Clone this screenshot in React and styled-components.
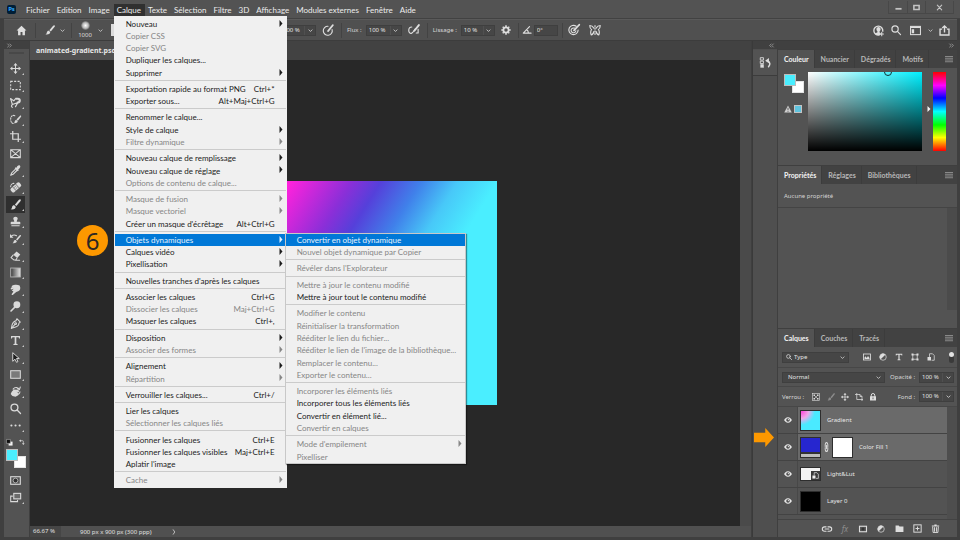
import React from "react";
import styled, { createGlobalStyle, css } from "styled-components";

const Global = createGlobalStyle`
  * { box-sizing: border-box; }
  html, body, #root { height: 100%; }
  body { margin: 0; overflow: hidden; background: #3a3a3a; }
  body, button, input, select { font-family: "Noto Sans", "Open Sans", sans-serif; font-size: 6px; }
  button { border: 0; padding: 0; background: none; color: inherit; cursor: default; }
  ul { list-style: none; margin: 0; padding: 0; }
`;

/* ---------- icons (16 x 16 grid) ---------- */

const line = { fill: "none", stroke: "currentColor", strokeWidth: 1.5, strokeLinecap: "round", strokeLinejoin: "round" };
const solid = { fill: "currentColor" };

const glyphs = {
  home: <path {...solid} d="M8 1 0.8 8H3v7h3.6v-5h2.8v5H13V8h2.2z" />,
  brush: (
    <g {...solid}>
      <path d="M15.4.6c.7.7.4 1.6-.3 2.6L9.3 10.300 7 8.300 13 1.200c.8-.9 1.700-1.200 2.400-.6z" />
      <path d="M6.200 9.200l2.100 1.900c.3 2.600-2.400 4.600-7.600 3.900 2-.9 1.900-2.100 2.300-3.500.4-1.500 1.800-2.600 3.200-2.300z" />
    </g>
  ),
  opacity: (
    <g {...line}>
      <path d="M13.500 7.500A6 6 0 1 1 8 3" />
      <path strokeWidth="2.200" d="M14.500 1.500 8 9.500" />
    </g>
  ),
  airbrush: (
    <g {...line}>
      <path d="M5 4c-3 0-4 2-4 4.500S2.500 13 4.500 12.500 8 9 10 6" />
      <path strokeWidth="2.600" d="M14.500 1.500 8.500 9" />
      <path d="M13.500 7v5H11" />
    </g>
  ),
  gear: (
    <g>
      <circle cx="8" cy="8" r="4.300" fill="none" stroke="currentColor" strokeWidth="3" />
      <path {...line} strokeWidth="2.400" strokeLinecap="butt" d="M8 .5v2.500M8 13v2.500M.5 8H3M13 8h2.500M2.700 2.700l1.800 1.800M11.500 11.500l1.800 1.800M2.700 13.300l1.800-1.800M11.500 4.500l1.800-1.800" />
    </g>
  ),
  angle: <path {...line} strokeWidth="1.800" d="M12 2.500 2 13h12.500M7.500 7.500c2 1.200 2.800 3 2.800 5.500" />,
  target: (
    <g {...line}>
      <path d="M11 3A6.200 6.200 0 1 0 13.500 8" />
      <path d="M8.500 5.500A3.200 3.200 0 1 0 10.500 9" />
      <path strokeWidth="2.400" d="M15 1 8 8.500" />
    </g>
  ),
  butterfly: (
    <g {...line}>
      <path d="M8 2v12" strokeDasharray="1.500 2" />
      <path d="M6.500 5.500C5 3 2.500 2 1 2c0 2.500.8 4.500 2.500 5.500C1.800 9 2 13 3 14.500 5 14.500 6 12 6.500 10M9.500 5.500C11 3 13.500 2 15 2c0 2.500-.8 4.500-2.500 5.500C14.200 9 14 13 13 14.500c-2 0-3-2.500-3.500-4.500" />
    </g>
  ),
  user: (
    <g>
      <path {...line} strokeWidth="2" d="M9 14.500A6.500 6.500 0 1 1 14.200 9" />
      <path {...solid} d="M8 3c2 0 3 1.400 3 3.300 0 1.500-.7 2.500-1.500 3.200v1L11 12v2.500H5L3 12.300l3.500-1.800v-1C5.700 8.800 5 7.800 5 6.300 5 4.400 6 3 8 3z" />
      <path {...line} d="M12.700 10.500v5M10.200 13h5" />
    </g>
  ),
  search: (
    <g {...line} strokeWidth="1.900">
      <circle cx="6.500" cy="6.500" r="5" />
      <path d="m10.300 10.300 5 5" />
    </g>
  ),
  workspace: (
    <g>
      <rect x=".8" y="2" width="14.400" height="12" {...line} strokeLinejoin="miter" />
      <path {...solid} d="M1 2h14v2.500H1zM2.500 6H6v6H2.500z" />
    </g>
  ),
  share: <path {...line} strokeWidth="2" strokeLinecap="butt" strokeLinejoin="miter" d="M4.500 6H1.500v8.500h13V6h-3M8 11V1.500M4.800 4.500 8 1.500l3.200 3" />,
  chevron: <path {...line} strokeWidth="2.400" d="m3 6 5 5 5-5" />,
  chevronRight: <path {...line} strokeWidth="2" d="m6 2 4 6-4 6" />,
  dblRight: <path {...line} strokeWidth="1.800" d="m2 3 5 5-5 5M9 3l5 5-5 5" />,
  dblLeft: <path {...line} strokeWidth="1.800" d="M7 3 2 8l5 5M14 3 9 8l5 5" />,
  minimize: <path {...solid} d="M1 9h14v4H1z" />,
  maximize: <path fill="none" stroke="currentColor" strokeWidth="3.500" d="M2 3.500h12v9H2z" />,
  close: <path {...line} strokeWidth="2.600" d="m3 2.500 10 11M13 2.500l-10 11" />,
  burger: <path fill="none" stroke="currentColor" strokeWidth="1.600" d="M0 3h16M0 6.500h16M0 10h16M0 13.500h16" />,
  move: (
    <g>
      <path {...line} d="M8 2v12M2 8h12" />
      <path {...solid} d="M8 0l3 3.500H5zM8 16l-3-3.500h6zM0 8l3.500-3v6zM16 8l-3.500 3V5z" />
    </g>
  ),
  marquee: <rect x="1" y="2" width="14" height="12" fill="none" stroke="currentColor" strokeWidth="1.500" strokeDasharray="3 2" />,
  lasso: (
    <g {...line} strokeWidth="1.700">
      <path d="M1 2.500 5.500 5.500 8.500 2" />
      <path d="M1 2.500 3.500 11 11.500 8M3.500 11c-2 1.500-1.500 3.500 0 4M8 14l3.500-6" />
      <path strokeWidth="3" strokeLinecap="butt" d="M8.500 2.500h3a2.700 2.700 0 0 1 0 5.400H10" />
    </g>
  ),
  quickselect: (
    <g>
      <path {...line} strokeDasharray="2 1.800" d="M7 2.500C4 1 1 3 1 7.500S3 14 6 14" />
      <g transform="translate(4.500 2) scale(.75)" {...solid}>
        <path d="M15.400.6c.7.7.4 1.600-.3 2.600L9.300 10.300 6.500 8 13 1.200c.8-.9 1.700-1.200 2.400-.6z" />
        <path d="M6.200 8.800l2.700 2.300c.3 2.900-2.400 4.900-7.600 4.200 2-.9 1.500-2.400 1.900-3.800.4-1.500 1.600-3 3-2.700z" />
      </g>
    </g>
  ),
  crop: <path {...line} strokeWidth="1.800" strokeLinecap="butt" strokeLinejoin="miter" d="M4 0v12h12M0 4h12v12" />,
  frame: <path {...line} strokeLinejoin="miter" d="M1 2.500h14v11.500H1zM1 2.500 15 14M15 2.500 1 14" />,
  dropper: (
    <g>
      <path {...solid} d="M10.500 1.800c1.400-1.400 3-1.800 4-.8s.5 2.600-.9 4L12 6.500l.8 1-1.600 1.500L6.800 4.700 8.400 3.200l1 .7z" />
      <path {...line} strokeWidth="1.600" d="M8 6 2.500 11.500 1 15l3.500-1.500L10 8" />
    </g>
  ),
  heal: (
    <g>
      <g transform="rotate(-42 8 8)">
        <rect x="0" y="4.500" width="17" height="7.500" rx="2.500" {...solid} />
        <path stroke="#535353" strokeWidth="1" d="M5.500 4v8M11.500 4v8" />
        <path {...line} stroke="#535353" strokeWidth="1.200" d="M7.500 6.800h.1M9.500 6.800h.1M7.500 9.600h.1M9.500 9.600h.1" />
      </g>
      <path {...line} strokeDasharray="1.500 1.500" d="M1 7C1 4 3 2 6 2" />
    </g>
  ),
  stamp: <path {...solid} d="M8 1c2 0 3.200 1.200 3.200 2.800 0 1.700-1.400 2.400-1.400 4.700H14c.6 0 1 .4 1 1V12H1V9.500c0-.6.4-1 1-1h4.200c0-2.300-1.400-3-1.400-4.700C4.800 2.200 6 1 8 1zM2 13.500h12V15H2z" />,
  history: (
    <g>
      <g transform="translate(3 2.500) scale(.82)" {...solid}>
        <path d="M15.400.6c.7.7.4 1.600-.3 2.600L9.300 10.300 7 8.300 13 1.200c.8-.9 1.700-1.200 2.400-.6z" />
        <path d="M6.200 9.200l2.100 1.900c.3 2.600-2.400 4.600-7.600 3.900 2-.9 1.900-2.100 2.300-3.500.4-1.500 1.800-2.600 3.200-2.300z" />
      </g>
      <path {...line} d="M2 4.500c2.500-2 5-2 7.500-.500" />
      <path {...solid} d="M0 1.500V7h5z" />
    </g>
  ),
  eraser: (
    <g>
      <path {...solid} d="M9.500 2 15 6.500l-4.500 5L4.800 7z" />
      <path {...line} d="M4.500 7.500 1.500 11l4 3.500h3L10 12M8 15h6" />
    </g>
  ),
  gradient: (
    <g>
      <defs>
        <linearGradient id="toolGradient">
          <stop offset="0" stopColor="#3a3a3a" />
          <stop offset="1" stopColor="#e4e4e4" />
        </linearGradient>
      </defs>
      <rect x="1" y="1.500" width="14" height="13" fill="url(#toolGradient)" stroke="#b5b5b5" strokeWidth="1.300" />
    </g>
  ),
  smudge: <path {...solid} d="M3 2.500C6 .5 11 .5 14 2l1 3.500c0 3-1.500 5-4 5.500l-2 .5-5 4.500c-1 .5-2-.5-1.500-1.500L5 11 2.500 9.500 5.500 7 1.500 8c-.8-1-.5-2 .5-2.500L5 4.500 2 5z" />,
  dodge: (
    <g>
      <circle cx="10" cy="5.500" r="5" {...solid} />
      <path {...line} strokeWidth="2.400" d="M6.500 9.500 1.500 14.500" />
    </g>
  ),
  pen: (
    <g {...line}>
      <path d="m10 1 5 5-2 1.500c0 3-2.500 5-6 6L2 15l1-5c1-3.500 3-5.500 5.700-6z" />
      <path d="m2 15 5.500-6" />
      <circle cx="8.200" cy="8.300" r="1.300" />
    </g>
  ),
  text: <path {...solid} d="M1.500 1.500h13V5h-1.300l-.7-1.700H9.200v9.400l1.800.5v1.300H5v-1.300l1.800-.5V3.300H3.500L2.800 5H1.500z" />,
  select: <path fill="#1c1c1c" stroke="#d8d8d8" strokeWidth="1.400" d="M4 1v12.500l3.300-3L9.500 15l2-1-2-4.500h4z" />,
  rect: <rect x="1" y="2.500" width="14" height="11" fill="#7a7a7a" stroke="currentColor" strokeWidth="1.500" />,
  rotate: (
    <g>
      <path {...solid} d="M2.500 8.500 5.500 5l5 .5 3 1.500-1 2-3-.8 3 2-.5 3.300-4 2-4.500-.8L1 11.500z" />
      <path {...line} d="M4.500 4.500C7 1 12 1.500 13.500 5M15 1.500 13.700 5.300 10.500 4M12.500 12c1.500-1 2-2 2-3.500" />
    </g>
  ),
  dots: <path {...line} strokeWidth="3" d="M2 8h.1M8 8h.1M14 8h.1" />,
  mask: (
    <g>
      <rect x="1" y="2.500" width="14" height="11" fill="none" stroke="currentColor" strokeWidth="1.600" />
      <circle cx="8" cy="8" r="3.500" fill="#303030" stroke="currentColor" strokeWidth="1" />
    </g>
  ),
  screen: (
    <g>
      <rect x="5.500" y="2" width="10" height="8" fill="#6b6b6b" stroke="currentColor" strokeWidth="1.600" />
      <path {...line} strokeLinejoin="miter" d="M3.500 6H1v8h10v-2" />
    </g>
  ),
  defaults: (
    <g>
      <path fill="#f0f0f0" d="M6 6h9v9H6z" />
      <path fill="#101010" stroke="#bbb" strokeWidth="1.200" d="M1 1h9v9H1z" />
    </g>
  ),
  swap: (
    <g>
      <path {...line} strokeWidth="1.800" d="M4 4.500h5.500c1.500 0 2 .8 2 2V11" />
      <path {...solid} d="M0 4.500 5 1v7zM11.500 16 8 11h7z" />
    </g>
  ),
  panelHistory: (
    <g {...line} strokeWidth="1.300" strokeLinejoin="miter">
      <path d="M1 1h4v3.500H1zM1 6h4v3.500H1z" />
      <path {...solid} stroke="none" d="M.5 10.500h5v5h-5z" />
      <path strokeWidth="2.200" d="M12.500 14c2.800-2.500 2.500-7-2-8.500" />
      <path {...solid} stroke="none" d="M7.500 5.500 13 1.500v7.500z" />
    </g>
  ),
  warning: (
    <g>
      <path {...solid} d="M8 1 15.500 15H.5z" />
      <path stroke="#444" strokeWidth="1.600" d="M8 5.500v5M8 12v1.600" />
    </g>
  ),
  image: (
    <g>
      <rect x="1" y="2" width="14" height="12" fill="none" stroke="currentColor" strokeWidth="1.700" />
      <path {...solid} d="M3 12V9l2-2.500L7.500 10 10 6l3 4v2z" />
    </g>
  ),
  adjust: (
    <g>
      <circle cx="8" cy="8" r="6.500" fill="none" stroke="currentColor" strokeWidth="1.400" />
      <path {...solid} d="M12.600 3.400A6.500 6.500 0 0 0 3.400 12.600z" />
    </g>
  ),
  shape: (
    <g fill="none" stroke="currentColor" strokeWidth="1.500">
      <path d="M3.500 3.500h9v9h-9z" />
      <path {...solid} stroke="none" d="M1 1h4v4H1zM11 1h4v4h-4zM1 11h4v4H1zM11 11h4v4h-4z" />
    </g>
  ),
  smart: (
    <g>
      <path {...line} strokeLinejoin="miter" d="M5 7V1.500h6L14.500 5v9.500H10" />
      <path {...solid} d="M1 8h7v7H1z" />
    </g>
  ),
  checker: (
    <g>
      <rect x="1" y="1" width="14" height="14" fill="none" stroke="currentColor" strokeWidth="1.200" />
      <path {...solid} d="M3 3h3v3H3zM10 3h3v3h-3zM6.500 6.500h3v3h-3zM3 10h3v3H3zM10 10h3v3h-3z" />
    </g>
  ),
  artboard: <path {...line} strokeLinecap="butt" strokeLinejoin="miter" d="M0 3h10l4 4v9M3.500 0v13H16M10 3v4h4" />,
  lock: (
    <g>
      <path {...line} strokeWidth="2" d="M4.500 7V4.500a3.500 3.500 0 0 1 7 0V7" />
      <path {...solid} d="M2 6.500h12V15H2z" />
      <path stroke="#444" strokeWidth="1.600" d="M8 9v3.500" />
    </g>
  ),
  eye: (
    <g>
      <path {...solid} d="M8 2.500c4 0 6.500 3 7.700 5.500C14.500 10.500 12 13.500 8 13.500S1.500 10.500.3 8C1.500 5.500 4 2.500 8 2.500z" />
      <circle cx="8" cy="8" r="3.600" fill="#505050" />
      <circle cx="8.800" cy="7.200" r="1.300" {...solid} />
    </g>
  ),
  chain: (
    <g {...line} strokeWidth="2">
      <path d="M5 7V4a3 3 0 0 1 6 0v3M5 9v3a3 3 0 0 0 6 0V9M8 5.500v5" />
    </g>
  ),
  link: (
    <g {...line} strokeWidth="1.800">
      <path d="M6.500 4.500H4a3.500 3.500 0 0 0 0 7h2.500M9.500 4.500H12a3.500 3.500 0 0 1 0 7H9.500M5 8h6" />
    </g>
  ),
  addMask: (
    <g>
      <rect x="1" y="2.500" width="14" height="11" fill="none" stroke="currentColor" strokeWidth="2.200" />
      <circle cx="8" cy="8" r="3" fill="#333" />
    </g>
  ),
  folder: <path {...solid} d="M1 2.500h5.500L8 4.500h7v9.500H1z" />,
  add: (
    <g>
      <rect x="1.500" y="1.500" width="13" height="13" fill="none" stroke="currentColor" strokeWidth="1.700" />
      <path stroke="currentColor" strokeWidth="1.700" d="M8 4.500v7M4.500 8h7" />
    </g>
  ),
  trash: (
    <g>
      <path {...solid} d="M1.500 2.500H6V1h4v1.500h4.500v2h-13z" />
      <path {...line} strokeWidth="1.700" d="M3 5.500 3.700 15h8.600L13 5.500M6.300 6.500v6.500M9.700 6.500v6.500" />
    </g>
  ),
  arrow: <path {...solid} d="M0 4h9V0l7 8-7 8v-4H0z" />,
  triangle: <path {...solid} d="M2 0 14 8 2 16z" />,
};

const Svg = styled.svg`
  display: block;
  flex: none;
  width: ${(p) => p.$w}px;
  height: ${(p) => p.$h || p.$w}px;
  overflow: visible;
`;

const Icon = ({ name, size = 10, height }) => (
  <Svg $w={size} $h={height} viewBox="0 0 16 16" preserveAspectRatio={height ? "none" : "xMidYMid meet"} aria-hidden="true">
    {glyphs[name]}
  </Svg>
);

/* ---------- window ---------- */

const Window = styled.div`
  height: 100vh;
  display: grid;
  grid-template-rows: 19px 22px minmax(0, 1fr);
  padding: 0 3px 3px 4px;
  background: #3f3f3f;
  color: #dcdcdc;
  overflow: hidden;
`;

const TitleBar = styled.header`
  display: flex;
  align-items: center;
  margin: 0 -3px 0 -4px;
  padding: 1px 6px 0 7px;
  background: #535353;
  border-bottom: 1px solid #424242;
`;

const Logo = styled.span`
  width: 9px;
  height: 9px;
  margin-right: 7px;
  border-radius: 2px;
  background: #001e36;
  color: #31a8ff;
  font-size: 6px;
  font-weight: 700;
  line-height: 9px;
  text-align: center;
`;

const MenuBar = styled.nav`
  display: flex;
  flex: 1;
`;

const MenuSlot = styled.div`
  position: relative;
`;

const MenuButton = styled.button`
  height: 12px;
  padding: 0 4px 0 3px;
  font-family: Lato, sans-serif;
  font-size: 8px;
  line-height: 12px;
  color: #ececec;
  background: ${(p) => (p.$open ? "#303030" : "transparent")};
`;

const WindowButtons = styled.div`
  display: flex;
  align-self: flex-start;
  border: 1px solid #484848;
  border-top: 0;
`;

const WindowButton = styled.button`
  display: grid;
  place-items: center;
  width: ${(p) => (p.$wide ? 28 : 18)}px;
  height: 12px;
  color: #c4c4c4;
  & + & { border-left: 1px solid #484848; }
`;

const OptionsBar = styled.div`
  display: flex;
  align-items: center;
  padding: 0 4px 0 11px;
  background: #505050;
  border: 1px solid #5a5a5a;
  border-width: 1px 0 1px 0;
  border-bottom-color: #3c3c3c;
`;

const IconButton = styled.button`
  display: flex;
  align-items: center;
  justify-content: center;
  flex: none;
  width: ${(p) => p.$w || 18}px;
  height: 16px;
  color: ${(p) => (p.$dim ? "#8c8c8c" : "#dedede")};
`;

const Rule = styled.span`
  flex: none;
  width: 1px;
  height: 15px;
  margin: 0 ${(p) => p.$gap || 1}px;
  background: #434343;
`;

const BrushTip = styled.button`
  display: flex;
  flex-direction: column;
  align-items: center;
  gap: 1px;
  width: 20px;
  line-height: 8px;
`;

const TipDot = styled.span`
  width: 9px;
  height: 9px;
  border-radius: 50%;
  background: radial-gradient(circle, #ffffff, #b8b8b8 45%, #555555 75%);
`;

const BrushPanelIcon = styled.span`
  width: 9px;
  height: 12px;
  background: #dcdcdc;
`;

const Covered = styled.span`
  flex: none;
  width: 155px;
`;

const Label = styled.label`
  flex: none;
  padding: 0 4px 0 ${(p) => (p.$flush ? 0 : 4)}px;
  color: #d8d8d8;
  white-space: nowrap;
`;

const Combo = styled.span`
  display: flex;
  flex: none;
  width: ${(p) => p.$w}px;
  height: 11px;
  background: #464646;
  border: 1px solid #3f3f3f;
  color: #e4e4e4;
`;

const ComboInput = styled.input`
  flex: 1;
  min-width: 0;
  height: 9px;
  padding: 0 0 0 2px;
  border: 0;
  background: none;
  color: inherit;
  line-height: 9px;
  outline: 0;
`;

const ComboButton = styled.button`
  display: grid;
  place-items: center;
  width: 11px;
  border-left: 1px solid #505050;
`;

const Spacer = styled.span`
  flex: 1;
`;

const Workspace = styled.main`
  display: grid;
  grid-template-columns: 25px minmax(0, 1fr) 25px 179px;
  gap: 0 1px;
  min-height: 0;
`;

/* ---------- tools ---------- */

const Toolbar = styled.aside`
  display: flex;
  flex-direction: column;
  align-items: center;
  background: #535353;
  min-height: 0;
`;

const DockHead = styled.div`
  display: flex;
  align-items: center;
  align-self: stretch;
  justify-content: ${(p) => p.$align || "flex-start"};
  height: 8px;
  flex: none;
  padding: 0 3px;
  background: #404040;
  color: #c4c4c4;
`;

const Grip = styled.span`
  flex: none;
  width: 15px;
  height: 2px;
  margin: 3px 0 6px;
  background: #484848;
`;

const Tool = styled.button`
  position: relative;
  display: flex;
  align-items: center;
  justify-content: center;
  flex: none;
  width: 19px;
  height: ${(p) => (p.$tall ? 18 : 17)}px;
  margin-right: 3px;
  color: #dadada;
  background-color: ${(p) => (p.$active ? "#2f2f2f" : "transparent")};
  ${(p) =>
    p.$more &&
    css`
      &::after {
        content: "";
        position: absolute;
        right: 1px;
        bottom: 2px;
        border: 1px solid #c8c8c8;
        border-top-color: transparent;
        border-left-color: transparent;
      }
    `}
`;

const SwatchActions = styled.div`
  display: flex;
  justify-content: space-between;
  width: 19px;
  margin: 5px 3px 3px 0;
`;

const Swatches = styled.div`
  position: relative;
  flex: none;
  width: 20px;
  height: 19px;
  margin: 0 2px 3px 0;
`;

const Swatch = styled.button`
  position: absolute;
  width: 12px;
  height: 12px;
  background: ${(p) => p.$color};
  ${(p) => (p.$front ? "top: 0; left: 0; border: 1px solid #bdbdbd;" : "right: 0; bottom: 0; border: 1px solid #e4e4e4;")}
`;

/* ---------- document ---------- */

const Document = styled.section`
  display: grid;
  grid-template-columns: minmax(0, 1fr) 11px;
  grid-template-rows: 19px minmax(0, 1fr) 11px;
  background: #4a4a4a;
  min-height: 0;
`;

const DocTabs = styled.div`
  grid-column: 1 / -1;
  display: flex;
  background: #424242;
`;

const DocTab = styled.button`
  padding: 0 6px;
  background: #505050;
  color: #e6e6e6;
  font-size: 7px;
  font-weight: 700;
`;

const Canvas = styled.div`
  position: relative;
  background: #282828;
  overflow: hidden;
`;

const Artboard = styled.div`
  position: absolute;
  left: 242px;
  top: 121px;
  width: 225px;
  height: 224px;
  background: linear-gradient(122deg, #ff22dc 5%, #8a2fd8 22%, #5540da 30%, #4080ea 41%, #48c8f8 51%, #4aeeff 62%);
`;

const StepBadge = styled.div`
  position: absolute;
  left: 47px;
  top: 165px;
  width: 31px;
  height: 31px;
  border-radius: 50%;
  background: #fd9800;
  color: #2b2623;
  font-size: 24px;
  line-height: 31px;
  text-align: center;
`;

const StatusBar = styled.footer`
  grid-column: 1 / -1;
  display: flex;
  align-items: center;
  gap: 19px;
  background: #505050;
  color: #e0e0e0;
`;

const ZoomLevel = styled.span`
  width: 31px;
  padding-left: 3px;
  background: #464646;
  line-height: 11px;
`;

/* ---------- panels ---------- */

const MiniDock = styled.aside`
  display: flex;
  flex-direction: column;
  background: #4f4f4f;
  border-left: 1px solid #3a3a3a;
`;

const MiniPanel = styled.button`
  display: grid;
  place-items: center;
  height: 26px;
  margin-top: 1px;
  background: #535353;
  border-bottom: 1px solid #3c3c3c;
`;

const StepArrow = styled.div`
  margin: 352px 0 0 1px;
  color: #fd9800;
`;

const Dock = styled.aside`
  display: flex;
  flex-direction: column;
  min-height: 0;
  background: #3f3f3f;
`;

const Panel = styled.section`
  display: flex;
  flex-direction: column;
  flex: ${(p) => (p.$grow ? "1 1 0" : "none")};
  min-height: 0;
  margin-top: 1px;
  background: #535353;
`;

const Tabs = styled.div`
  display: flex;
  align-items: stretch;
  flex: none;
  height: 18px;
  padding-right: 4px;
  background: #424242;
  color: #b8b8b8;
`;

const Tab = styled.button`
  padding: 0 5px 0 6px;
  border-right: 1px solid #3c3c3c;
  font-family: Lato, sans-serif;
  font-size: 7px;
  font-weight: 700;
  ${(p) => p.$active && "background: #535353; color: #f4f4f4;"}
`;

const PanelMenu = styled.button`
  display: flex;
  align-items: center;
  margin-left: auto;
  color: #9c9c9c;
`;

const ColorBody = styled.div`
  display: grid;
  grid-template-columns: 20px minmax(0, 1fr) 13px;
  column-gap: 4px;
  padding: 4px 11px 14px 6px;
`;

const ColorSide = styled.div`
  display: flex;
  flex-direction: column;
  gap: 9px;
  padding-top: 2px;
`;

const Gamut = styled.div`
  display: flex;
  align-items: center;
  gap: 2px;
  color: #cfcfcf;
`;

const GamutChip = styled.button`
  width: 8px;
  height: 8px;
  border: 1px solid #c4c4c4;
  background: #5fc4df;
`;

const ColorField = styled.div`
  position: relative;
  height: 79px;
  margin-right: 7px;
  overflow: hidden;
  background: linear-gradient(to top, #000000, transparent), linear-gradient(to right, #ffffff, #00f0ff);
`;

const Picker = styled.span`
  position: absolute;
  left: 76px;
  top: -4px;
  width: 8px;
  height: 8px;
  border: 1px solid #0f3338;
  border-radius: 50%;
`;

const Hue = styled.div`
  position: relative;
  background: linear-gradient(#ff0000, #ff00ff 17%, #0000ff 33%, #00ffff 50%, #00ff00 67%, #ffff00 83%, #ff0000);
`;

const HueMark = styled.span`
  position: absolute;
  left: -6px;
  top: 34px;
  color: #f4f4f4;
`;

const EmptyNote = styled.p`
  margin: 0;
  padding: 1px 6px 0;
  border-bottom: 1px solid #444444;
  line-height: 22px;
  color: #d4d4d4;
`;

const ScrollArea = styled.div`
  flex: 1;
  margin-bottom: 18px;
  border-right: 10px solid #4b4b4b;
`;

const LayerRow = styled.div`
  display: flex;
  align-items: center;
  flex: none;
  height: ${(p) => p.$h || 19}px;
  padding: 0 3px 0 4px;
  border-bottom: 1px solid #474747;
`;

const SelectBox = styled.span`
  position: relative;
  display: flex;
  align-items: center;
  flex: none;
  width: ${(p) => p.$w}px;
  height: 11px;
  padding: 0 3px;
  background: #464646;
  border: 1px solid #3f3f3f;
`;

const Select = styled.select`
  appearance: none;
  flex: 1;
  min-width: 0;
  height: 9px;
  padding: 0 2px;
  border: 0;
  background: none;
  color: #e4e4e4;
  line-height: 9px;
`;

const Switch = styled.button`
  display: flex;
  width: 5px;
  height: 11px;
  margin-left: 10px;
  border-radius: 3px;
  background: #3a3a3a;
  &::before {
    content: "";
    width: 5px;
    height: 5px;
    border-radius: 50%;
    background: #e2e2e2;
  }
`;

const LayerList = styled.ul`
  flex: 1;
  min-height: 0;
  padding-bottom: 4px;
  border-right: 10px solid #4e4e4e;
`;

const Layer = styled.li`
  display: grid;
  grid-template-columns: 20px minmax(0, 1fr);
  height: 27px;
  border-bottom: 1px solid #434343;
`;

const EyeButton = styled.button`
  display: grid;
  place-items: center;
  border-right: 1px solid #484848;
  color: #e8e8e8;
`;

const LayerBody = styled.div`
  display: flex;
  align-items: center;
  gap: 6px;
  padding-left: 2px;
  background: ${(p) => (p.$selected ? "#6a6a6a" : "transparent")};
  color: #e6e6e6;
`;

const Thumbs = styled.span`
  display: flex;
  align-items: center;
  gap: 2px;
`;

const Thumb = styled.span`
  position: relative;
  width: 21px;
  height: ${(p) => p.$h || 21}px;
  border: 1px solid #2e2e2e;
  background: ${(p) => p.$fill};
`;

const SmartMark = styled.span`
  position: absolute;
  right: 0;
  bottom: 0;
  padding: 1px;
  background: #3a3a3a;
  color: #eeeeee;
`;

const PanelFoot = styled.div`
  display: flex;
  align-items: center;
  justify-content: flex-end;
  flex: none;
  height: 18px;
  padding-right: 13px;
  border-top: 1px solid #434343;
`;

const Fx = styled.i`
  font-size: 8px;
`;

/* ---------- drop-down menus ---------- */

const MenuList = styled.ul`
  position: absolute;
  z-index: 2;
  display: flex;
  flex-direction: column;
  padding: 1px;
  background: #f0f0f0;
  color: #1c1c1c;
`;

const MainMenu = styled(MenuList)`
  left: 0;
  top: 12px;
  width: 173px;
  min-height: 472px;
  padding-top: 2px;
`;

const SubMenu = styled(MenuList)`
  left: 170px;
  top: -1px;
  width: 181px;
  min-height: 231px;
  border: 1px solid #c8c8c8;
  padding: 0;
  box-shadow: 1px 1px 1px #00000066;
`;

const Item = styled.li`
  position: relative;
  display: flex;
  flex: 1 0 12px;
  color: ${(p) => (p.$disabled ? "#868686" : "#1c1c1c")};
  ${(p) => p.$active && "background: #0078d7; color: #e6f2fc;"}
`;

const ItemButton = styled.button`
  display: flex;
  align-items: center;
  flex: 1;
  padding: 0 11px;
  white-space: nowrap;
  font-family: Lato, sans-serif;
  font-size: 8px;
  line-height: 12px;
`;

const Shortcut = styled.span`
  margin-left: auto;
`;

const SubArrow = styled.span`
  position: absolute;
  right: 3px;
  top: 2px;
`;

const Divider = styled.li`
  flex: none;
  height: 4px;
  border-bottom: 2px solid #f0f0f0;
  background: linear-gradient(#f0f0f0 50%, #cbcbcb 50%);
`;

const item = (label, extra = {}) => ({ label, ...extra });
const off = { disabled: true };
const more = { more: true };

const smartItems = [
  item("Convertir en objet dynamique", { active: true }),
  item("Nouvel objet dynamique par Copier", off),
  null,
  item("Révéler dans l'Explorateur", off),
  null,
  item("Mettre à jour le contenu modifié", off),
  item("Mettre à jour tout le contenu modifié"),
  null,
  item("Modifier le contenu", off),
  item("Réinitialiser la transformation", off),
  item("Rééditer le lien du fichier...", off),
  item("Rééditer le lien de l'image de la bibliothèque...", off),
  item("Remplacer le contenu...", off),
  item("Exporter le contenu...", off),
  null,
  item("Incorporer les éléments liés", off),
  item("Incorporer tous les éléments liés"),
  item("Convertir en élément lié..."),
  item("Convertir en calques", off),
  null,
  item("Mode d'empilement", { ...off, ...more }),
  item("Pixelliser", off),
];

const layerItems = [
  item("Nouveau", more),
  item("Copier CSS", off),
  item("Copier SVG", off),
  item("Dupliquer les calques..."),
  item("Supprimer", more),
  null,
  item("Exportation rapide au format PNG", { keys: "Ctrl+*" }),
  item("Exporter sous...", { keys: "Alt+Maj+Ctrl+G" }),
  null,
  item("Renommer le calque..."),
  item("Style de calque", more),
  item("Filtre dynamique", { ...off, ...more }),
  null,
  item("Nouveau calque de remplissage", more),
  item("Nouveau calque de réglage", more),
  item("Options de contenu de calque...", off),
  null,
  item("Masque de fusion", { ...off, ...more }),
  item("Masque vectoriel", { ...off, ...more }),
  item("Créer un masque d'écrêtage", { keys: "Alt+Ctrl+G" }),
  null,
  item("Objets dynamiques", { active: true, more: true, sub: smartItems }),
  item("Calques vidéo", more),
  item("Pixellisation", more),
  null,
  item("Nouvelles tranches d'après les calques"),
  null,
  item("Associer les calques", { keys: "Ctrl+G" }),
  item("Dissocier les calques", { ...off, keys: "Maj+Ctrl+G" }),
  item("Masquer les calques", { keys: "Ctrl+," }),
  null,
  item("Disposition", more),
  item("Associer des formes", { ...off, ...more }),
  null,
  item("Alignement", more),
  item("Répartition", { ...off, ...more }),
  null,
  item("Verrouiller les calques...", { keys: "Ctrl+/" }),
  null,
  item("Lier les calques"),
  item("Sélectionner les calques liés", off),
  null,
  item("Fusionner les calques", { keys: "Ctrl+E" }),
  item("Fusionner les calques visibles", { keys: "Maj+Ctrl+E" }),
  item("Aplatir l'image"),
  null,
  item("Cache", { ...off, ...more }),
];

const renderItems = (items) =>
  items.map((it, i) =>
    it === null ? (
      <Divider key={i} role="separator" />
    ) : (
      <Item key={i} role="none" $disabled={it.disabled} $active={it.active}>
        <ItemButton type="button" role="menuitem" aria-disabled={it.disabled}>
          {it.label}
          {it.keys && <Shortcut>{it.keys}</Shortcut>}
        </ItemButton>
        {it.more && (
          <SubArrow>
            <Icon name="triangle" size={4} height={7} />
          </SubArrow>
        )}
        {it.sub && <SubMenu role="menu">{renderItems(it.sub)}</SubMenu>}
      </Item>
    )
  );

const menus = ["Fichier", "Edition", "Image", "Calque", "Texte", "Sélection", "Filtre", "3D", "Affichage", "Modules externes", "Fenêtre", "Aide"];

const tools = [
  ["move", "Déplacement"], ["marquee", "Rectangle de sélection"], ["lasso", "Lasso magnétique"], ["quickselect", "Sélection rapide"],
  ["crop", "Recadrage"], ["frame", "Image", true], ["dropper", "Pipette"], ["heal", "Correcteur"], ["brush", "Pinceau"],
  ["stamp", "Tampon"], ["history", "Forme d'historique"], ["eraser", "Gomme"], ["gradient", "Dégradé"], ["smudge", "Doigt"],
  ["dodge", "Densité"], ["pen", "Plume"], ["text", "Texte"], ["select", "Sélection de tracé"], ["rect", "Rectangle"],
  ["rotate", "Rotation"], ["zoom", "Zoom", true], ["dots", "Modifier la barre"],
];

const PercentField = ({ id, value, width = 35, arrow = true, label }) => (
  <Combo $w={width}>
    <ComboInput id={id} aria-label={label} defaultValue={value} />
    {arrow && (
      <ComboButton type="button" aria-label="Régler">
        <Icon name="chevron" size={5} />
      </ComboButton>
    )}
  </Combo>
);

const PanelTabs = ({ names }) => (
  <Tabs role="tablist">
    {names.map((n, i) => (
      <Tab key={n} type="button" role="tab" aria-selected={i === 0} $active={i === 0}>
        {n}
      </Tab>
    ))}
    <PanelMenu type="button" aria-label="Menu du panneau">
      <Icon name="burger" size={8} />
    </PanelMenu>
  </Tabs>
);

const gradientThumb = "radial-gradient(circle at 0 0, #ff3fdc, #f0a8ea 28%, #4aeaff 52%)";

const LayerItem = ({ name, selected, children }) => (
  <Layer>
    <EyeButton type="button" aria-label={`Visibilité ${name}`}>
      <Icon name="eye" size={8} />
    </EyeButton>
    <LayerBody $selected={selected}>
      <Thumbs>{children}</Thumbs>
      {name}
    </LayerBody>
  </Layer>
);

export default function App() {
  return (
    <Window>
      <Global />
      <TitleBar>
        <Logo>Ps</Logo>
        <MenuBar aria-label="Menu principal">
          {menus.map((m) => (
            <MenuSlot key={m}>
              <MenuButton type="button" $open={m === "Calque"}>
                {m}
              </MenuButton>
              {m === "Calque" && <MainMenu role="menu">{renderItems(layerItems)}</MainMenu>}
            </MenuSlot>
          ))}
        </MenuBar>
        <WindowButtons>
          <WindowButton type="button" aria-label="Réduire"><Icon name="minimize" size={7} /></WindowButton>
          <WindowButton type="button" aria-label="Agrandir"><Icon name="maximize" size={7} /></WindowButton>
          <WindowButton type="button" aria-label="Fermer" $wide><Icon name="close" size={7} /></WindowButton>
        </WindowButtons>
      </TitleBar>

      <OptionsBar>
        <IconButton type="button" $w={12} aria-label="Accueil"><Icon name="home" size={11} /></IconButton>
        <Rule $gap={8} />
        <IconButton type="button" $w={12} aria-label="Pinceau"><Icon name="brush" size={10} /></IconButton>
        <IconButton type="button" $w={12} aria-label="Préréglages"><Icon name="chevron" size={5} /></IconButton>
        <Rule $gap={3} />
        <BrushTip type="button"><TipDot />1000</BrushTip>
        <IconButton type="button" $w={10} aria-label="Formes"><Icon name="chevron" size={5} /></IconButton>
        <IconButton type="button" $w={20} aria-label="Panneau pinceau"><BrushPanelIcon /></IconButton>
        <Covered />
        <PercentField value="100 %" width={36} label="Opacité" />
        <IconButton type="button" $w={24} aria-label="Pression opacité"><Icon name="opacity" size={12} /></IconButton>
        <Rule />
        <Label htmlFor="flow">Flux :</Label>
        <PercentField id="flow" value="100 %" width={36} />
        <IconButton type="button" $w={24} aria-label="Aérographe"><Icon name="airbrush" size={12} /></IconButton>
        <Rule />
        <Label htmlFor="smooth">Lissage :</Label>
        <PercentField id="smooth" value="10 %" width={34} />
        <IconButton type="button" $w={22} aria-label="Options de lissage"><Icon name="gear" size={10} /></IconButton>
        <Rule />
        <IconButton type="button" $w={14} aria-label="Angle"><Icon name="angle" size={10} /></IconButton>
        <PercentField value="0°" width={24} arrow={false} label="Angle de la forme" />
        <Rule $gap={4} />
        <IconButton type="button" $w={14} aria-label="Pression taille"><Icon name="target" size={12} /></IconButton>
        <IconButton type="button" $w={28} aria-label="Symétrie"><Icon name="butterfly" size={12} /></IconButton>
        <Spacer />
        <IconButton type="button" aria-label="Compte"><Icon name="user" size={11} /></IconButton>
        <IconButton type="button" aria-label="Rechercher"><Icon name="search" size={10} /></IconButton>
        <IconButton type="button" $w={20} aria-label="Espace de travail"><Icon name="workspace" size={11} /></IconButton>
        <IconButton type="button" $w={10} aria-label="Choisir un espace"><Icon name="chevron" size={5} /></IconButton>
        <IconButton type="button" aria-label="Partager"><Icon name="share" size={11} /></IconButton>
      </OptionsBar>

      <Workspace>
        <Toolbar aria-label="Outils">
          <DockHead><Icon name="dblRight" size={5} /></DockHead>
          <Grip />
          {tools.map(([name, title, single]) => (
            <Tool key={name} type="button" aria-label={title} $active={name === "brush"} $more={!single}>
              <Icon name={name === "zoom" ? "search" : name} size={11} />
            </Tool>
          ))}
          <SwatchActions>
            <Icon name="defaults" size={7} />
            <Icon name="swap" size={6} />
          </SwatchActions>
          <Swatches>
            <Swatch type="button" aria-label="Arrière-plan" $color="#ffffff" />
            <Swatch type="button" aria-label="Premier plan" $color="#4aeeff" $front />
          </Swatches>
          <Tool type="button" aria-label="Mode masque" $tall><Icon name="mask" size={11} /></Tool>
          <Tool type="button" aria-label="Mode d'écran" $more><Icon name="screen" size={11} /></Tool>
        </Toolbar>

        <Document>
          <DocTabs>
            <DocTab type="button">animated-gradient.psd</DocTab>
          </DocTabs>
          <Canvas>
            <Artboard />
            <StepBadge>6</StepBadge>
          </Canvas>
          <StatusBar>
            <ZoomLevel>66.67 %</ZoomLevel>
            <span>900 px x 900 px (300 ppp)</span>
            <Icon name="chevronRight" size={6} />
          </StatusBar>
        </Document>

        <MiniDock>
          <DockHead $align="flex-end"><Icon name="dblLeft" size={5} /></DockHead>
          <MiniPanel type="button" aria-label="Historique"><Icon name="panelHistory" size={11} /></MiniPanel>
          <StepArrow><Icon name="arrow" size={20} height={19} /></StepArrow>
        </MiniDock>

        <Dock>
          <DockHead $align="flex-end"><Icon name="dblRight" size={5} /></DockHead>
          <Panel>
            <PanelTabs names={["Couleur", "Nuancier", "Dégradés", "Motifs"]} />
            <ColorBody>
              <ColorSide>
                <Swatches>
                  <Swatch type="button" aria-label="Couleur d'arrière-plan" $color="#ffffff" />
                  <Swatch type="button" aria-label="Couleur de premier plan" $color="#4aeeff" $front />
                </Swatches>
                <Gamut>
                  <Icon name="warning" size={8} />
                  <GamutChip type="button" aria-label="Couleur imprimable" />
                </Gamut>
              </ColorSide>
              <ColorField><Picker /></ColorField>
              <Hue><HueMark><Icon name="triangle" size={4} height={6} /></HueMark></Hue>
            </ColorBody>
          </Panel>
          <Panel $grow>
            <PanelTabs names={["Propriétés", "Réglages", "Bibliothèques"]} />
            <EmptyNote>Aucune propriété</EmptyNote>
            <ScrollArea />
          </Panel>
          <Panel>
            <PanelTabs names={["Calques", "Couches", "Tracés"]} />
            <LayerRow $h={21}>
              <SelectBox $w={67}>
                <Icon name="search" size={6} />
                <Select aria-label="Filtre de calques"><option>Type</option></Select>
                <Icon name="chevron" size={5} />
              </SelectBox>
              <Spacer />
              <IconButton type="button" $w={16} aria-label="Pixels"><Icon name="image" size={8} /></IconButton>
              <IconButton type="button" $w={16} aria-label="Réglages"><Icon name="adjust" size={8} /></IconButton>
              <IconButton type="button" $w={16} aria-label="Texte"><Icon name="text" size={8} /></IconButton>
              <IconButton type="button" $w={16} aria-label="Formes"><Icon name="shape" size={8} /></IconButton>
              <IconButton type="button" $w={16} aria-label="Objets dynamiques"><Icon name="smart" size={8} /></IconButton>
              <Switch type="button" role="switch" aria-label="Filtrage" />
            </LayerRow>
            <LayerRow>
              <SelectBox $w={103}>
                <Select aria-label="Mode de fusion"><option>Normal</option></Select>
                <Icon name="chevron" size={5} />
              </SelectBox>
              <Spacer />
              <Label htmlFor="opacity">Opacité :</Label>
              <PercentField id="opacity" value="100 %" />
            </LayerRow>
            <LayerRow $h={20}>
              <Label as="span" $flush>Verrou :</Label>
              <IconButton type="button" $w={16} aria-label="Transparence"><Icon name="checker" size={8} /></IconButton>
              <IconButton type="button" $w={14} $dim aria-label="Pixels"><Icon name="brush" size={8} /></IconButton>
              <IconButton type="button" $w={14} aria-label="Position"><Icon name="move" size={8} /></IconButton>
              <IconButton type="button" $w={14} aria-label="Plan de travail"><Icon name="artboard" size={8} /></IconButton>
              <IconButton type="button" $w={14} aria-label="Tout"><Icon name="lock" size={8} /></IconButton>
              <Spacer />
              <Label htmlFor="fill">Fond :</Label>
              <PercentField id="fill" value="100 %" />
            </LayerRow>
            <LayerList>
              <LayerItem name="Gradient" selected><Thumb $fill={gradientThumb} /></LayerItem>
              <LayerItem name="Color Fill 1" selected>
                <Thumb $fill="linear-gradient(#2626cf 76%, #333333 76%, #333333 82%, #bdbdbd 82%)" />
                <Icon name="chain" size={7} height={10} />
                <Thumb $fill="#ffffff" />
              </LayerItem>
              <LayerItem name="Light&amp;Lut">
                <Thumb $h={14} $fill="#f4f4f4"><SmartMark><Icon name="smart" size={7} /></SmartMark></Thumb>
              </LayerItem>
              <LayerItem name="Layer 0"><Thumb $fill="#000000" /></LayerItem>
            </LayerList>
            <PanelFoot>
              <IconButton type="button" aria-label="Lier"><Icon name="link" size={10} /></IconButton>
              <IconButton type="button" $dim aria-label="Effets"><Fx>fx</Fx></IconButton>
              <IconButton type="button" aria-label="Masque"><Icon name="addMask" size={8} /></IconButton>
              <IconButton type="button" aria-label="Réglage"><Icon name="adjust" size={8} /></IconButton>
              <IconButton type="button" aria-label="Groupe"><Icon name="folder" size={9} /></IconButton>
              <IconButton type="button" aria-label="Nouveau calque"><Icon name="add" size={9} /></IconButton>
              <IconButton type="button" aria-label="Supprimer"><Icon name="trash" size={9} /></IconButton>
            </PanelFoot>
          </Panel>
        </Dock>
      </Workspace>
    </Window>
  );
}
